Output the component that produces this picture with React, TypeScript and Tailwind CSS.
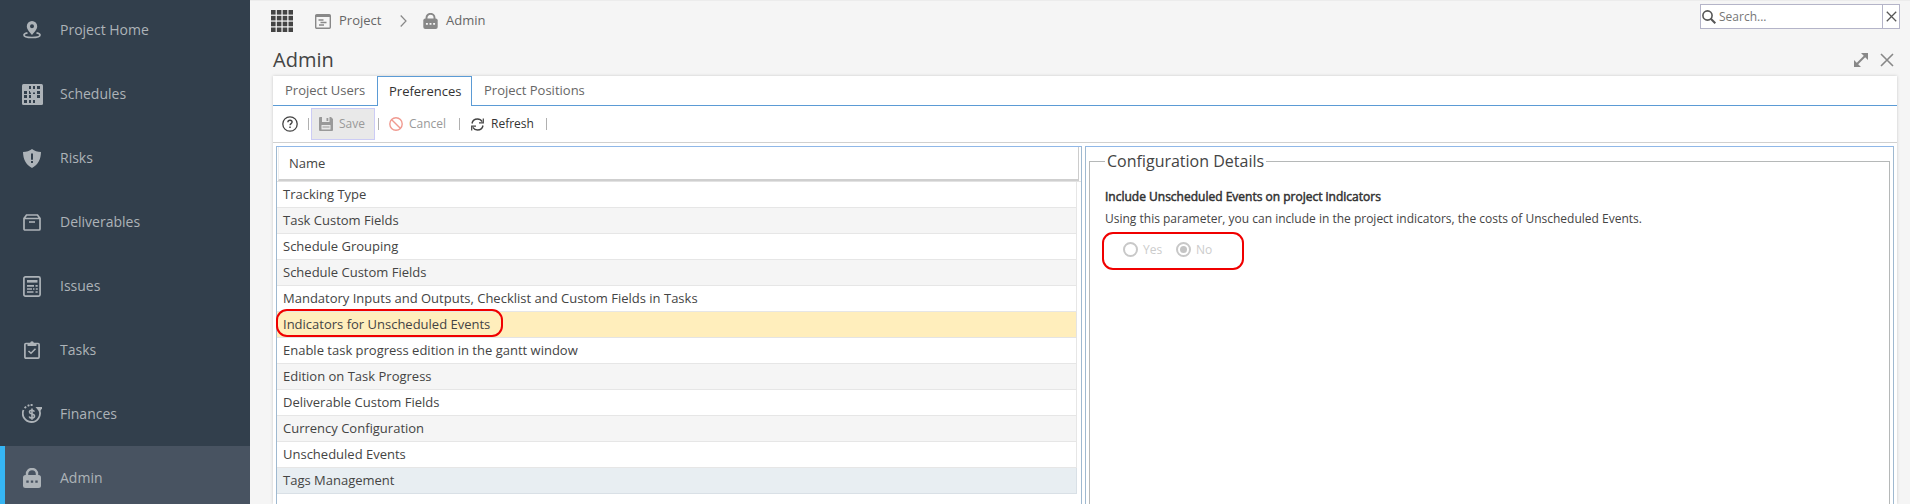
import React from 'react';

interface NavItem {
  label: string;
  icon: React.ReactNode;
}

interface IconProps {
  className?: string;
}

const LockIcon: React.FC<IconProps & { dot?: string }> = ({ className, dot = '#485361' }) => (
  <svg className={className} viewBox="0 0 18 20" fill="none">
    <path d="M4 8V6a5 5 0 0 1 10 0v2" stroke="currentColor" strokeWidth="2.4" />
    <rect x="0" y="7" width="18" height="13" rx="2.5" fill="currentColor" />
    <path d="M3.3 12.5h2.4v2.2H3.3zM7.8 12.5h2.4v2.2H7.8zM12.3 12.5h2.4v2.2h-2.4z" fill={dot} />
  </svg>
);

const CloseIcon: React.FC<IconProps> = ({ className }) => (
  <svg className={className} viewBox="0 0 14 14" fill="none" stroke="currentColor">
    <path d="M1 1l12 12M13 1L1 13" strokeWidth="1.6" />
  </svg>
);

const navItems: NavItem[] = [
  {
    label: 'Project Home',
    icon: (
      <svg className="w-[18px] h-[18px]" viewBox="0 0 18 18" fill="none">
        <path
          fillRule="evenodd"
          d="M9 0a5.2 5.2 0 0 0-5.2 5.2C3.800 8.500 7 11.500 9 14c2-2.500 5.200-5.500 5.200-8.800A5.200 5.200 0 0 0 9 0zm0 3.200a2 2 0 1 1 0 4 2 2 0 0 1 0-4z"
          fill="currentColor"
        />
        <path d="M4.500 11.800C2.500 12.200 1 13 1 14c0 1.500 3.500 2.500 8 2.500s8-1 8-2.500c0-1-1.500-1.800-3.500-2.200" stroke="currentColor" strokeWidth="1.700" />
      </svg>
    ),
  },
  {
    label: 'Schedules',
    icon: (
      <svg className="w-[21px] h-[21px]" viewBox="0 0 21 21">
        <rect width="21" height="21" rx="1.500" fill="currentColor" />
        <path
          d="M7 2h2v3H7zM11 2h2v3h-2zM15 2h3v3h-3zM2 7h3v3H2zM7 7h2v3H7zM15 7h3v3h-3zM11 7h2v3h-2zM2 11h3v3H2zM7 11h2v3H7zM15 11h3v3h-3zM2 16h3v3H2zM7 16h2v3H7zM11 16h2v3h-2z"
          fill="#323f4c"
        />
        <path d="M8 6h6v2.500H8z" fill="currentColor" />
      </svg>
    ),
  },
  {
    label: 'Risks',
    icon: (
      <svg className="w-[18px] h-[19px]" viewBox="0 0 18 19">
        <path d="M9 0c2.500 2 5.500 2.800 9 3-.2 7-2.500 12.500-9 16C2.500 15.500.2 10 0 3c3.500-.2 6.500-1 9-3z" fill="currentColor" />
        <path d="M8 4.500h2v6.200H8zM8 12h2v2H8z" fill="#323f4c" />
      </svg>
    ),
  },
  {
    label: 'Deliverables',
    icon: (
      <svg className="w-[18px] h-[17px]" viewBox="0 0 18 17" fill="none" stroke="currentColor">
        <path d="M1 4.500h16V15a1 1 0 0 1-1 1H2a1 1 0 0 1-1-1zM1 4.500L3.500 1h11L17 4.500" strokeWidth="1.700" />
        <path d="M6 8h6" strokeWidth="1.600" />
      </svg>
    ),
  },
  {
    label: 'Issues',
    icon: (
      <svg className="w-[18px] h-[21px]" viewBox="0 0 18 21" fill="none" stroke="currentColor">
        <rect x=".9" y=".9" width="16.200" height="19.200" rx="1.500" strokeWidth="1.700" />
        <path d="M4 5.300h10.500" strokeWidth="2.600" />
        <path d="M4 9.900h7M12.500 9.900h2.200M4 13h5M10 13h1.500M12.800 13h2M4 16h6.500M12.500 16h2.200" strokeWidth="1.700" />
      </svg>
    ),
  },
  {
    label: 'Tasks',
    icon: (
      <svg className="w-4 h-[18px]" viewBox="0 0 16 18" fill="none" stroke="currentColor">
        <rect x=".9" y="2.500" width="14.200" height="14.600" rx="1" strokeWidth="1.700" />
        <path d="M3.500 2h2.700a1.800 1.800 0 0 1 3.600 0h2.700v3h-9z" fill="currentColor" stroke="none" />
        <path d="M4.500 10l2.500 2.300 4.500-4.500" strokeWidth="1.500" />
      </svg>
    ),
  },
  {
    label: 'Finances',
    icon: (
      <svg className="w-5 h-5" viewBox="0 0 20 20" fill="none" stroke="currentColor">
        <path d="M17.500 6.500a8.600 8.600 0 1 1-16-.5" strokeWidth="1.800" />
        <path d="M2.600 4.200l1.500-1.500M5.600 1.900l1.800-.8M8.600 1h2" strokeWidth="1.800" />
        <path d="M13.500 3H20v1.500L17.500 8z" fill="currentColor" stroke="none" />
        <path d="M12.400 7.600c-.5-1-1.400-1.400-2.500-1.400-1.400 0-2.400.7-2.400 1.900 0 2.700 5 1.200 5 4 0 1.300-1.100 2-2.600 2-1.300 0-2.300-.5-2.700-1.700M10 4.500v11.300" strokeWidth="1.600" />
      </svg>
    ),
  },
  { label: 'Admin', icon: <LockIcon className="w-[18px] h-5" /> },
];

const preferences = [
  'Tracking Type',
  'Task Custom Fields',
  'Schedule Grouping',
  'Schedule Custom Fields',
  'Mandatory Inputs and Outputs, Checklist and Custom Fields in Tasks',
  'Indicators for Unscheduled Events',
  'Enable task progress edition in the gantt window',
  'Edition on Task Progress',
  'Deliverable Custom Fields',
  'Currency Configuration',
  'Unscheduled Events',
  'Tags Management',
];

const rowColor = (name: string, index: number) => {
  if (name === 'Indicators for Unscheduled Events') return 'bg-[#ffeebc] border-[#e4e4e4]';
  if (name === 'Tags Management') return 'bg-[#e8eef2] border-[#d9e0e6]';
  return index % 2 ? 'bg-[#f5f5f5] border-[#e6e6e6]' : 'bg-white border-[#e6e6e6]';
};

const Sidebar: React.FC<{ active: string }> = ({ active }) => (
  <nav className="w-[250px] h-full shrink-0 bg-[#323f4c] overflow-hidden">
    <div className="-mt-0.5">
      {navItems.map((item) => (
        <a
          key={item.label}
          className={`flex items-center h-16 border-l-[5px] text-[#adb3b8] ${
            active === item.label ? 'bg-[#485361] border-[#36b5f3]' : 'border-transparent'
          }`}
        >
          <span className="w-[55px] flex justify-center pr-px">{item.icon}</span>
          <span className="pb-px text-sm">{item.label}</span>
        </a>
      ))}
    </div>
  </nav>
);

const Breadcrumb: React.FC = () => (
  <div className="flex items-center h-10 pl-[21px] text-[13px] text-[#666]">
    <svg className="w-[22px] h-[22px] mr-[22px]" viewBox="0 0 22 22" fill="#444">
      {[0, 6, 12, 18].map((y) =>
        [0, 6, 12, 18].map((x) => <rect key={`${x}-${y}`} x={x - x / 36} y={y - y / 36} width="4.600" height="4.600" />)
      )}
    </svg>
    <svg className="w-4 h-[15px] mr-2" viewBox="0 0 16 15" fill="none" stroke="#888">
      <rect x=".7" y=".7" width="14.600" height="13.600" rx="1" strokeWidth="1.400" />
      <path d="M1 2h14" strokeWidth="2" />
      <path d="M3.500 6h5M5.500 8.500h6M4 11h5" strokeWidth="1.300" />
    </svg>
    <span className="w-[61px]">Project</span>
    <svg className="w-[7px] h-3 mr-4" viewBox="0 0 7 12" fill="none" stroke="#888">
      <path d="M.7.500L6 6 .7 11.500" strokeWidth="1.200" />
    </svg>
    <LockIcon className="w-[15px] h-4 mr-2 text-[#888]" dot="#f5f5f5" />
    <span>Admin</span>
  </div>
);

const Separator: React.FC = () => <span className="w-px h-3 bg-[#b0b0b0]" />;

const Toolbar: React.FC = () => (
  <div className="flex items-center h-[37px] border-b border-[#d0d0d0] text-xs shrink-0">
    <svg className="w-4 h-4 ml-[9px] mr-2.5" viewBox="0 0 16 16" fill="none" stroke="#444">
      <circle cx="8" cy="8" r="7.200" strokeWidth="1.300" />
      <path d="M5.900 6.300c0-1.300.9-2.100 2.100-2.100s2.100.8 2.100 1.900c0 1.500-2 1.600-2 3.200" strokeWidth="1.400" />
      <path d="M8 10.600v1.500" strokeWidth="1.500" />
    </svg>
    <Separator />
    <button type="button" className="flex items-center h-8 w-16 ml-0.5 mr-[3px] pl-[7px] border border-[#ccccf5] bg-[#e9e9e9] text-[#999]">
      <svg className="w-3.5 h-3.5 mr-1.5" viewBox="0 0 14 14">
        <path d="M1 0h11l2 2v11a1 1 0 0 1-1 1H1a1 1 0 0 1-1-1V1a1 1 0 0 1 1-1z" fill="#999" />
        <path d="M3 0h7.500v5H3zM2.500 8h9v4.500h-9z" fill="#e9e9e9" />
        <path d="M7.500 1h1.800v3H7.500zM3.500 9.500h7v1h-7z" fill="#999" />
      </svg>
      Save
    </button>
    <Separator />
    <button type="button" className="flex items-center ml-2.5 w-[70px] text-[#999]">
      <svg className="w-3.5 h-3.5 mr-1.5" viewBox="0 0 14 14" fill="none" stroke="#f09a90">
        <circle cx="7" cy="7" r="6.200" strokeWidth="1.400" />
        <path d="M2.700 2.700l8.600 8.600" strokeWidth="1.400" />
      </svg>
      Cancel
    </button>
    <Separator />
    <button type="button" className="flex items-center ml-[11px] w-[75px] text-[#333]">
      <svg className="w-[13px] h-[13px] mr-[7px]" viewBox="0 0 13 13" fill="none" stroke="#444">
        <path d="M1 5.500C1.500 2.800 3.700 1 6.500 1c2 0 3.700 1 4.700 2.600M12 7.500c-.5 2.700-2.700 4.500-5.500 4.500-2 0-3.700-1-4.700-2.600" strokeWidth="1.400" />
        <path d="M12.300.5v4.300H8M.7 12.500V8.200H5" strokeWidth="1.200" />
      </svg>
      Refresh
    </button>
    <Separator />
  </div>
);

const PreferenceGrid: React.FC = () => (
  <div className="relative w-[806px] shrink-0 border border-b-0 border-[#9fb9d0] border-t-[#90b8e8]">
    <div className="flex h-[35px] pl-px pr-0.5 border-b border-[#e2e2e2]">
      <div className="flex-1 flex items-center pt-0.5 pl-2.5 border-l border-l-[#eee] border-r border-r-[#ccc] border-b-2 border-b-[#cfcfcf] text-[13px] text-[#444]">
        Name
      </div>
    </div>
    {preferences.map((name, index) => (
      <div
        key={name}
        className={`flex items-center h-[26px] mr-1 pl-1.5 border-b border-r text-[13px] text-[#444] ${rowColor(name, index)}`}
      >
        {name}
      </div>
    ))}
    <div className="absolute -left-px top-[162px] w-[227px] h-7 border-2 border-[#f00000] rounded-[11px]" />
  </div>
);

const ConfigurationDetails: React.FC = () => (
  <div className="flex-1 ml-[3px] mr-[3px] pl-[3px] pr-[3px] pt-[2px] border border-b-0 border-[#9fb9d0] border-t-[#90b8e8]">
    <fieldset className="h-[400px] border border-[#b5b8b8] px-[15px] text-xs text-[#444]">
      <legend className="px-0.5 text-base leading-6">Configuration Details</legend>
      <p className="mt-4 leading-4 text-[#333] [-webkit-text-stroke:0.5px_#333]">
        Include Unscheduled Events on project indicators
      </p>
      <p className="mt-1.5 leading-4">
        Using this parameter, you can include in the project indicators, the costs of Unscheduled Events.
      </p>
      <div className="flex items-center w-[142px] h-[38px] mt-[5px] -ml-[3px] pl-[19px] pb-1 border-2 border-[#f00000] rounded-[11px] text-[#ccc]">
        <span className="w-[15px] h-[15px] mr-[5px] rounded-full border-2 border-[#c8c8c8]" />
        <span className="w-[33px] pt-0.5">Yes</span>
        <span className="flex items-center justify-center w-[15px] h-[15px] mr-[5px] rounded-full border-2 border-[#c8c8c8]">
          <span className="w-[7px] h-[7px] rounded-full bg-[#c4c4c4]" />
        </span>
        <span className="pt-0.5">No</span>
      </div>
    </fieldset>
  </div>
);

const App: React.FC = () => {
  return (
    <div className="flex w-full h-[504px] overflow-hidden bg-[#f5f5f5] font-['Open_Sans',sans-serif]">
      <Sidebar active="Admin" />
      <main className="flex-1 min-w-0 flex flex-col border-t border-[#ececec]">
        <header className="flex justify-between h-[42px] pr-2.5">
          <Breadcrumb />
          <div className="flex mt-[3px] w-[200px] h-[25px] border border-[#b4b4c8] bg-white">
            <div className="flex-1 flex items-center pl-px text-xs text-[#777]">
              <svg className="w-3.5 h-3.5 mr-[3px]" viewBox="0 0 14 14" fill="none" stroke="#555">
                <circle cx="5.500" cy="5.500" r="4.600" strokeWidth="1.600" />
                <path d="M8.800 8.800L13.300 13.300" strokeWidth="2" />
              </svg>
              Search...
            </div>
            <div className="w-[17px] flex items-center justify-center border-l border-[#b4b4c8]">
              <CloseIcon className="w-[11px] h-[11px] text-[#555]" />
            </div>
          </div>
        </header>
        <div className="flex items-center justify-between h-[33px] pl-[23px] pr-4 text-[#888]">
          <h1 className="pt-px text-xl leading-8 text-[#444]">Admin</h1>
          <div className="flex gap-3">
            <svg className="w-3.5 h-3.5" viewBox="0 0 14 14" fill="currentColor">
              <path d="M7 0h7v7zM0 7v7h7z" />
              <path d="M3 11l8-8" stroke="currentColor" strokeWidth="2" />
            </svg>
            <CloseIcon className="w-3.5 h-3.5" />
          </div>
        </div>
        <section className="flex-1 flex flex-col min-h-0 ml-[23px] mr-[13px] bg-white shadow-[0_0_3px_rgba(0,0,0,0.18)]">
          <div className="flex h-[30px] shrink-0 text-[13px] text-[#666] leading-[29px]">
            <div className="w-[104px] pl-3 border-b border-[#5b9bd5]">Project Users</div>
            <div className="w-[95px] pl-[11px] border border-b-0 border-[#5b9bd5] text-[#333]">Preferences</div>
            <div className="flex-1 pl-3 border-b border-[#5b9bd5]">Project Positions</div>
          </div>
          <Toolbar />
          <div className="flex-1 flex min-h-0 pt-[3px] pl-[3px]">
            <PreferenceGrid />
            <ConfigurationDetails />
          </div>
        </section>
      </main>
    </div>
  );
};

export default App;
